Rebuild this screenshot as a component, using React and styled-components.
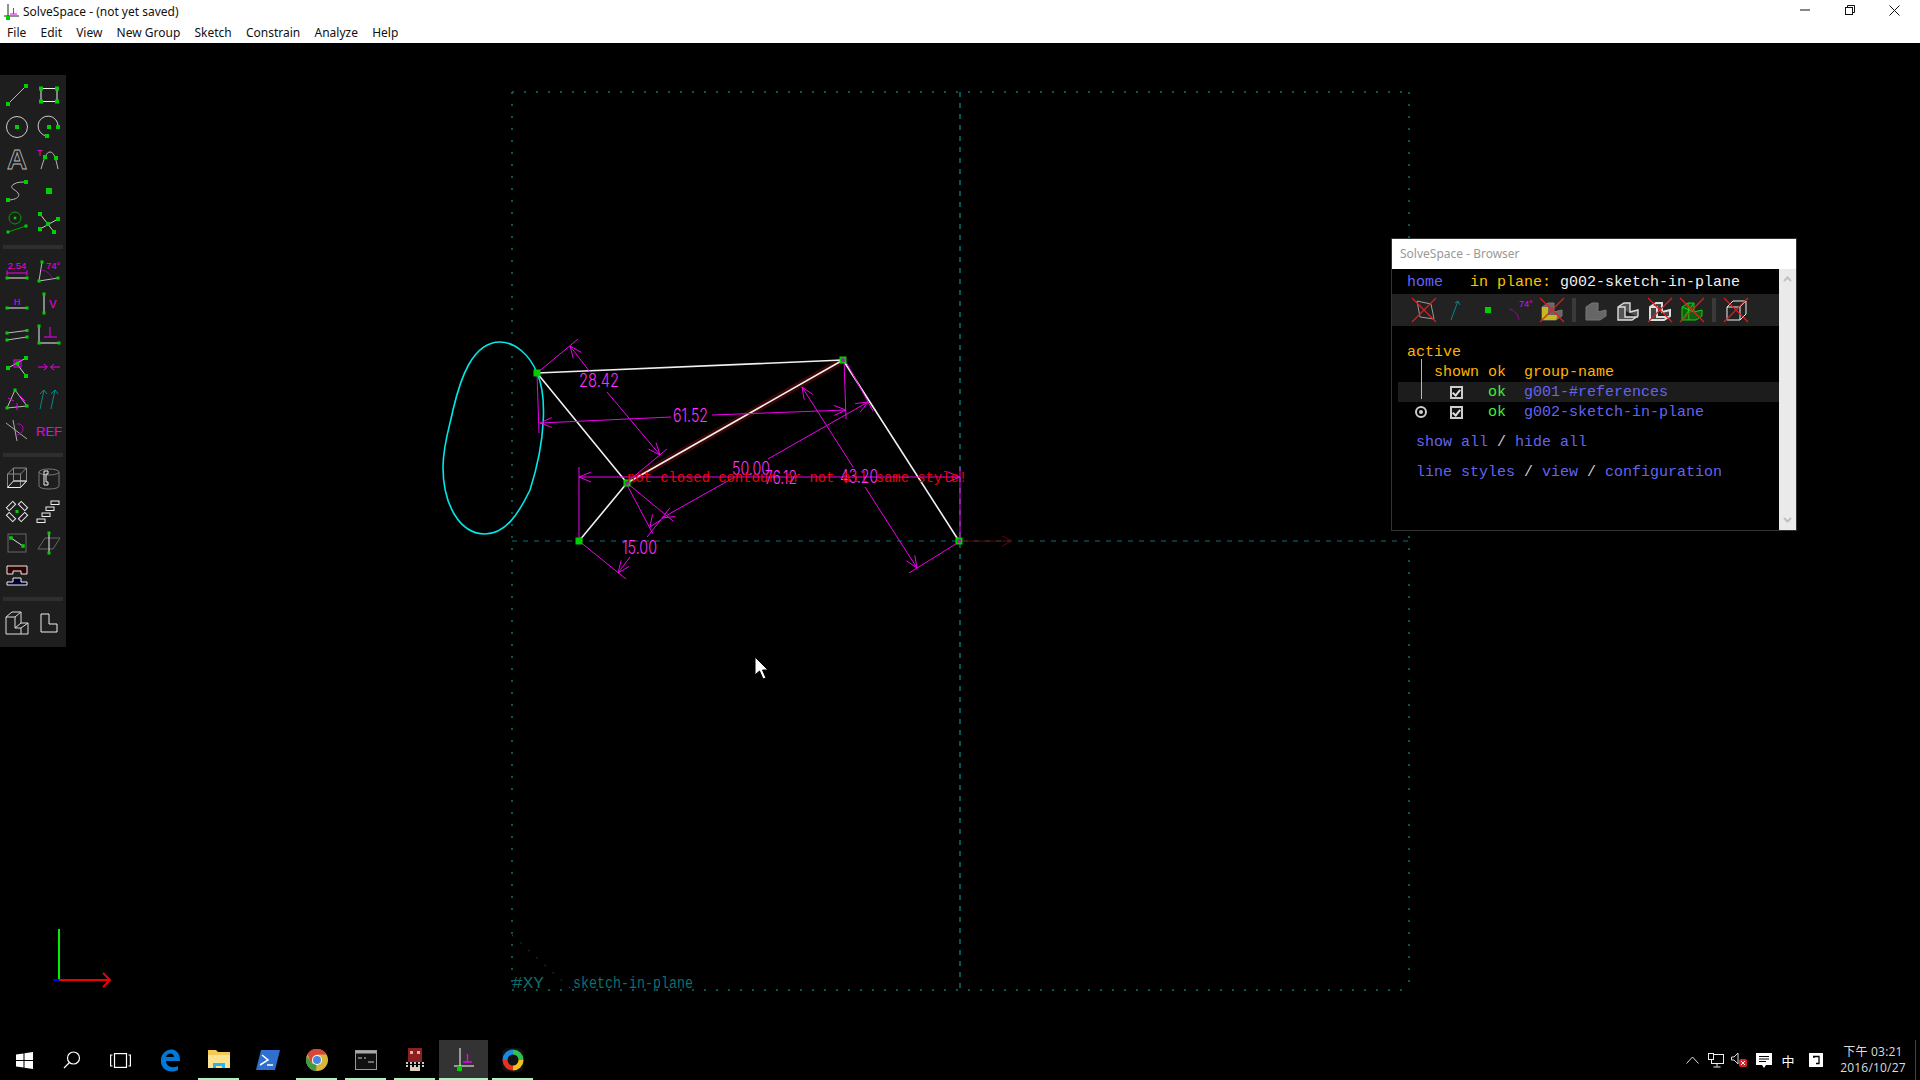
import React from 'react';
import styled, { createGlobalStyle } from 'styled-components';

const GREEN = '#00d000';
const MAGENTA = '#f000f0';
const UI_FONT = '"Noto Sans", "Open Sans", sans-serif';
const MONO_FONT = '"Liberation Mono", monospace';

const GlobalStyle = createGlobalStyle`
  html, body {
    margin: 0;
    padding: 0;
    background: #000;
    overflow: hidden;
  }
`;

const Page = styled.div`
  width: 1920px;
  height: 1080px;
  display: flex;
  flex-direction: column;
  font-family: ${UI_FONT};
`;

const TitleBar = styled.div`
  height: 22px;
  display: flex;
  align-items: center;
  background: #fff;
  padding-left: 3px;
`;

const TitleIcon = styled.div`
  width: 20px;
  height: 16px;
`;

const TitleText = styled.div`
  font-size: 12px;
  color: #111;
  flex: 1;
`;

const WindowControls = styled.div`
  display: flex;
  padding-right: 3px;
  align-self: flex-start;
`;

const WindowButton = styled.div`
  width: 45px;
  height: 20px;
  display: flex;
  align-items: center;
  justify-content: center;
`;

const MenuBar = styled.div`
  height: 21px;
  display: flex;
  align-items: center;
  background: #fff;
`;

const MenuItem = styled.div`
  font-size: 12px;
  color: #111;
  padding: 0 7.1px;
`;

const Canvas = styled.div`
  position: relative;
  flex: 1;
  background: #000;
`;

const CanvasSvg = styled.svg`
  position: absolute;
  inset: 0;
  width: 100%;
  height: 100%;
`;

const SketchText = styled.text`
  font-family: ${MONO_FONT};
`;

const DimensionText = styled.text`
  font-family: Inter, "Liberation Sans", sans-serif;
  font-weight: 300;
`;

const Toolbar = styled.div`
  position: absolute;
  left: 0;
  top: 32px;
  width: 66px;
  height: 572px;
  box-sizing: border-box;
  padding: 4px 1px 0;
  background: #1e1e1e;
`;

const ToolGrid = styled.div`
  display: grid;
  grid-template-columns: 32px 32px;
  grid-auto-rows: 32px;
`;

const ToolCell = styled.div`
  display: flex;
  align-items: center;
  justify-content: center;
`;

const ToolIcon = styled.svg`
  width: 24px;
  height: 24px;
  fill: none;
  overflow: visible;
`;

const ToolSeparator = styled.div`
  height: 4px;
  margin: 6px 2px;
  background: #2e2e2e;
`;

const HollowLabel = styled.text`
  font-family: "Liberation Sans", sans-serif;
  font-weight: 700;
  fill: none;
  stroke: #bbb;
  stroke-width: 0.8;
`;

const MagentaLabel = styled.text`
  font-family: "Liberation Sans", sans-serif;
  fill: ${MAGENTA};
  stroke: none;
`;

const BrowserWindow = styled.div`
  position: absolute;
  left: 1391px;
  top: 195px;
  width: 406px;
  height: 293px;
  box-sizing: border-box;
  border: 1px solid #333;
  display: flex;
  flex-direction: column;
  background: #000;
`;

const BrowserTitle = styled.div`
  height: 30px;
  line-height: 30px;
  background: #fff;
  color: #999;
  font-size: 12px;
  padding-left: 8px;
`;

const BrowserBody = styled.div`
  flex: 1;
  display: flex;
  min-height: 0;
`;

const BrowserContent = styled.div`
  flex: 1;
  padding-top: 3px;
  font-family: ${MONO_FONT};
  font-size: 15px;
`;

const ScrollBar = styled.div`
  width: 17px;
  background: #eaeaea;
  display: flex;
  flex-direction: column;
  align-items: center;
  justify-content: space-between;
  padding: 7px 0;
  box-sizing: border-box;
`;

const Line = styled.div`
  height: 20px;
  line-height: 22px;
  white-space: pre;
  padding-left: ${(p) => (p.$selected ? '9px' : '15px')};
  margin-left: ${(p) => (p.$selected ? '6px' : '0')};
  margin-top: ${(p) => (p.$gap ? '10px' : '0')};
  background: ${(p) => (p.$selected ? '#1c1c1c' : 'transparent')};
`;

const Txt = styled.span`
  color: ${(p) => p.$c};
`;

const CharCell = styled.span`
  display: inline-flex;
  width: 9px;
  height: 20px;
  vertical-align: top;
  align-items: center;
  justify-content: center;
`;

const CheckBox = styled.span`
  flex: none;
  width: 9px;
  height: 9px;
  border: 2px solid #ccc;
  background: #111;
  position: relative;

  &::after {
    content: '';
    position: absolute;
    left: 2px;
    top: 0;
    width: 3px;
    height: 6px;
    border: solid #ddd;
    border-width: 0 2px 2px 0;
    transform: rotate(40deg);
  }
`;

const Radio = styled.span`
  flex: none;
  width: 8px;
  height: 8px;
  border: 2px solid #ccc;
  border-radius: 50%;
  position: relative;

  &::after {
    content: '';
    position: absolute;
    left: 2px;
    top: 2px;
    width: 4px;
    height: 4px;
    border-radius: 50%;
    background: #ccc;
  }
`;

const IconStrip = styled.div`
  height: 32px;
  margin-top: 2px;
  display: flex;
  align-items: center;
  padding-left: 16px;
  background: #222;
`;

const StripCell = styled.div`
  width: 32px;
  display: flex;
  justify-content: center;
`;

const StripSeparator = styled.div`
  width: 4px;
  height: 24px;
  margin: 0 4px;
  background: #3a3a3a;
`;

const GroupList = styled.div`
  position: relative;
  margin-top: 16px;
`;

const ActiveRule = styled.div`
  position: absolute;
  left: 29px;
  top: 17px;
  width: 1px;
  height: 40px;
  background: #ffb400;
`;

const TaskBar = styled.div`
  height: 40px;
  display: flex;
  background: #000;
`;

const ShellButton = styled.div`
  width: 48px;
  display: flex;
  align-items: center;
  justify-content: center;
`;

const AppButtons = styled.div`
  display: flex;
  margin-left: 1px;
`;

const AppButton = styled.div`
  width: 49px;
  box-sizing: border-box;
  display: flex;
  align-items: center;
  justify-content: center;
  position: relative;
  background: ${(p) => (p.$active ? '#333' : 'transparent')};

  &::after {
    content: '';
    display: ${(p) => (p.$running ? 'block' : 'none')};
    position: absolute;
    bottom: 0;
    height: 2px;
    left: ${(p) => (p.$active ? '0' : '4px')};
    right: ${(p) => (p.$active ? '0' : '4px')};
    background: #a8f5b5;
  }
`;

const Tray = styled.div`
  margin-left: auto;
  display: flex;
  align-items: center;
`;

const TrayItem = styled.div`
  width: 24px;
  margin: ${(p) => (p.$spaced ? '0 4px' : '0')};
  display: flex;
  justify-content: center;
  color: #fff;
  font-size: ${(p) => (p.$cjk ? '13px' : 'inherit')};
  font-family: "Noto Sans CJK TC", sans-serif;
`;

const Clock = styled.div`
  width: 82px;
  display: flex;
  flex-direction: column;
  align-items: center;
  color: #ddd;
  font-size: 12px;
  letter-spacing: 0.2px;
  line-height: 16px;
  font-family: "Open Sans", "Noto Sans CJK TC", sans-serif;
`;

const ShowDesktop = styled.div`
  width: 1px;
  height: 40px;
  margin: 0 4px 0 1px;
  background: #444;
`;

const menus = ['File', 'Edit', 'View', 'New Group', 'Sketch', 'Constrain', 'Analyze', 'Help'];

function P({ x, y, s = 4 }) {
  return <rect x={x - s / 2} y={y - s / 2} width={s} height={s} fill={GREEN} stroke="none" />;
}

function Cross() {
  return <path d="M0 0 L24 24 M24 0 L0 24" stroke="#e02020" strokeWidth="1.1" />;
}

const lShape3d = 'M2 9 L8 5 L14 5 L14 14 L22 12 L22 18 L16 22 L2 22 Z';

const toolSections = [
  [
    <><path d="M3 21 L21 3" stroke="#bbb" /><P x={3} y={21} /><P x={21} y={3} /></>,
    <><rect x="4" y="5.5" width="16" height="13" stroke="#eee" /><P x={4} y={5.5} /><P x={20} y={5.5} /><P x={4} y={18.5} /><P x={20} y={18.5} /></>,
    <><circle cx="12" cy="12" r="10.5" stroke="#ccc" /><P x={12} y={12} /></>,
    <><path d="M21 12 A10 10 0 1 0 10 21" stroke="#ccc" /><P x={12} y={12} /><P x={21} y={12} /><P x={10} y={21} /></>,
    <HollowLabel x="12" y="22" fontSize="28" textAnchor="middle">A</HollowLabel>,
    <><MagentaLabel x="0" y="9" fontSize="9">T</MagentaLabel><path d="M4 22 C7 12 9 5 13 5 C17 5 19 12 21 22" stroke="#bbb" /><P x={8} y={10} /><P x={19} y={11} /></>,
    <><path d="M3 21 C10 21 16 18 13 14 C10 10 3 9 9 5 C12 3 17 3 21 3" stroke="#bbb" /><P x={3} y={21} /><P x={21} y={3} /></>,
    <P x={12} y={12} s={6} />,
    <><circle cx="10" cy="7" r="6" stroke="#00a000" /><P x={10} y={7} s={2.5} /><path d="M3 21 L21 15" stroke="#00a000" /><P x={3} y={21} s={3} /><P x={21} y={15} s={3} /></>,
    <><path d="M3 3 L17 21 M21 8 L3 18" stroke="#ccc" /><P x={3} y={3} /><P x={17} y={21} /><P x={21} y={8} /><P x={3} y={18} /><P x={11} y={13} /></>,
  ],
  [
    <><MagentaLabel x="12" y="10" fontSize="9.5" textAnchor="middle">2.54</MagentaLabel><path d="M2 14 H22 M2 11.5 V16.5 M22 11.5 V16.5" stroke={MAGENTA} /><path d="M2 19 H22" stroke="#eee" /><P x={2} y={19} s={3} /><P x={22} y={19} s={3} /></>,
    <><MagentaLabel x="9" y="9.5" fontSize="9.5">74°</MagentaLabel><path d="M5 3 L2 22 L21 19" stroke="#bbb" /><path d="M4 11 C10 12 14 15 15 20" stroke="#a000a0" /><P x={5} y={3} s={3} /><P x={2} y={22} s={3} /><P x={21} y={19} s={3} /></>,
    <><MagentaLabel x="12" y="14" fontSize="9" textAnchor="middle">H</MagentaLabel><path d="M2 17 H22" stroke="#eee" /><P x={2} y={17} s={3} /><P x={22} y={17} s={3} /></>,
    <><MagentaLabel x="16" y="17" fontSize="11" textAnchor="middle">V</MagentaLabel><path d="M7 3 V22" stroke="#eee" /><P x={7} y={3} s={3} /><P x={7} y={22} s={3} /></>,
    <><path d="M2 10 L22 7.5 M2 17 L22 14" stroke="#bbb" /><P x={2} y={10} s={3} /><P x={22} y={7.5} s={3} /><P x={2} y={17} s={3} /><P x={22} y={14} s={3} /></>,
    <><path d="M2 3 V20 H22" stroke="#eee" /><path d="M7 14 H20 M13 4 V14" stroke={MAGENTA} /><P x={2} y={3} s={3} /><P x={2} y={20} s={3} /><P x={22} y={20} s={3} /></>,
    <><path d="M3 13 L21 3 M12 9 L21 21" stroke="#ccc" /><rect x="9" y="5" width="7" height="7" stroke={MAGENTA} /><P x={3} y={13} /><P x={21} y={3} /><P x={21} y={21} /><P x={12.5} y={8.5} /></>,
    <path d="M1 12 H10 M7 9 L10.5 12 L7 15 M23 12 H14 M17 9 L13.5 12 L17 15" stroke={MAGENTA} />,
    <><path d="M10 3 L2 21 L22 19 Z" stroke="#bbb" /><path d="M3 11 L9 14 M15 9 L20 14 M12 16 L12 23" stroke={MAGENTA} /><P x={10} y={3} s={3} /><P x={2} y={21} s={3} /><P x={22} y={19} s={3} /></>,
    <path d="M3 22 L7 3 M3 7 L7 3 L10 7 M14 22 L18 3 M14 7 L18 3 L21 7" stroke="#008a8a" />,
    <><path d="M1 4 L22 20 M8 1 L12 22" stroke="#aaa" /><path d="M12 5 C18 4 20 11 16 14 C14 16 12 16 11 16" stroke="#c000c0" /></>,
    <MagentaLabel x="12" y="17" fontSize="13" textAnchor="middle">REF</MagentaLabel>,
  ],
  [
    <><path d="M8.5 1 H21.5 V14 L15.5 20.5 M2.5 7 L8.5 1 M15.5 7 L21.5 1 M2.5 7 H15.5 V20.5 M8.5 1 V14 H21.5 M2.5 7 V20.5" stroke="#888" /><path d="M2.5 20.5 H15.5 M2.5 20.5 L8.5 14 H21.5 L15.5 20.5" stroke="#eee" /></>,
    <><ellipse cx="12" cy="5" rx="10" ry="3" stroke="#777" /><path d="M2 5 V19 C2 23 22 23 22 19 V5" stroke="#777" /><path d="M11 4 H7 V18 H11 V15 H9 V7 H11 Z" stroke="#eee" /></>,
    <><rect x="1.5" y="5" width="9" height="4" transform="rotate(-45 6 7)" stroke="#eee" /><rect x="13.5" y="5" width="9" height="4" transform="rotate(45 18 7)" stroke="#eee" /><rect x="1.5" y="16" width="9" height="4" transform="rotate(45 6 18)" stroke="#eee" /><rect x="13.5" y="16" width="9" height="4" transform="rotate(-45 18 18)" stroke="#eee" /><P x={12} y={12.5} s={3} /></>,
    <><rect x="14" y="2" width="8" height="3.5" stroke="#eee" /><rect x="9" y="8" width="8" height="3.5" stroke="#eee" /><rect x="5" y="14" width="8" height="3.5" stroke="#eee" /><rect x="0" y="20" width="8" height="3.5" stroke="#eee" /></>,
    <><rect x="3" y="3" width="18" height="18" stroke="#666" /><path d="M6 7 L18 15" stroke="#ddd" /><P x={6} y={7} s={3.5} /><P x={18} y={15} s={3.5} /></>,
    <><path d="M8 7 H23 L16 18 H1 Z" stroke="#666" /><path d="M12 2 V22" stroke="#eee" /><P x={12} y={2} s={3} /><P x={12} y={22} s={3} /></>,
    <><path d="M2 3 H22 V11 H16 V8 H8 V11 H2 Z" stroke="#eee" fill="#300000" /><path d="M8 15 H16 V19 H22 V22 H2 V19 H8 Z" stroke="#eee" fill="#000030" /></>,
    null,
  ],
  [
    <><path d="M1 6 L7 1 H16 V12 H23 V23 H1 Z" stroke="#ddd" /><path d="M1 6 H10 V17 H16 M10 6 L16 1 M10 17 L16 12 M23 12 L16 17 V23" stroke="#ddd" /></>,
    <path d="M4 3 H12 V13 H20 V21 H4 Z" stroke="#eee" />,
  ],
];

const browserIcons = [
  { key: 'planes', cross: true, art: <path d="M5 3 L19 6 L22 21 L8 19 Z" stroke="#999" /> },
  { key: 'normals', art: <path d="M7 22 L14 3 M11 5 L14 3 L16 7" stroke="#008a8a" /> },
  { key: 'points', art: <P x={12} y={12} s={6} /> },
  { key: 'constraints', art: <><MagentaLabel x="11" y="9" fontSize="9">74°</MagentaLabel><path d="M1 11 C7 12 10 17 11 22" stroke="#a000a0" /></> },
  { key: 'faces', cross: true, art: <><path d={lShape3d} stroke="#777" fill="#666" /><path d="M2 9 H8 V17 H18 L16 22 H2 Z" fill="#c8b820" /></> },
  { sep: true, key: 's1' },
  { key: 'solid', art: <path d={lShape3d} stroke="#777" fill="#666" /> },
  { key: 'edges', art: <path d={lShape3d + ' M2 9 H9 V19 H22 M8 5 L14 5'} stroke="#ddd" fill="#555" strokeWidth="1.4" /> },
  { key: 'outline', cross: true, art: <path d={lShape3d + ' M2 9 H9 V19 H22'} stroke="#ddd" fill="#444" strokeWidth="2" /> },
  { key: 'mesh', cross: true, art: <path d={lShape3d + ' M2 9 L14 14 M8 5 L9 22 M14 5 L2 22'} stroke="#10d010" fill="#106010" /> },
  { sep: true, key: 's2' },
  { key: 'hidden', cross: true, art: <path d="M3 9 L9 3 H22 V16 L16 22 H3 Z M3 9 H16 V22 M16 9 L22 3" stroke="#eee" /> },
];

// drawing data, in page coordinates
const dimLines = [
  [537, 373, 578, 339], [570, 346, 590, 372], [607, 392, 660, 455], [626, 483, 667, 449],
  [537, 373, 539, 433], [540, 423, 671, 417], [712, 415, 846, 410], [844, 360, 846, 419],
  [579, 467, 579, 541], [579, 477, 960, 477], [960, 467, 960, 541],
  [662, 518, 733, 478], [768, 459, 868, 402], [627, 483, 673, 521], [845, 360, 873, 411],
  [579, 541, 626, 579], [618, 573, 630, 557], [626, 483, 653, 534], [647, 537, 663, 517],
  [853, 467, 802, 387], [865, 487, 917, 568], [959, 542, 909, 573],
];

const arrows = [
  [570, 346, 590, 372], [660, 455, 607, 392], [540, 423, 671, 417], [846, 410, 712, 415],
  [579, 477, 700, 477], [960, 477, 800, 477], [662, 518, 733, 478], [868, 402, 768, 459],
  [618, 573, 630, 557], [650, 527, 660, 512], [802, 387, 853, 467], [917, 568, 865, 487],
];

const dimTexts = [
  ['28.42', 579, 387, 40], ['61.52', 673, 422, 35], ['50.00', 732, 475, 38],
  ['76.12', 765, 484, 32], ['43.20', 840, 483, 38], ['15.00', 622, 554, 35],
];

function arrowHead([x, y, fx, fy]) {
  const len = Math.hypot(fx - x, fy - y);
  const ux = (fx - x) / len;
  const uy = (fy - y) / len;
  const a = [x + ux * 12 - uy * 5, y + uy * 12 + ux * 5];
  const b = [x + ux * 12 + uy * 5, y + uy * 12 - ux * 5];
  return `M${a[0]} ${a[1]} L${x} ${y} L${b[0]} ${b[1]}`;
}

function Drawing() {
  return (
    <CanvasSvg viewBox="0 43 1920 997">
      <g fill="none">
        <path d="M512 92 H1409 M512 990 H1409" stroke="#0a7070" strokeWidth="1.5" strokeDasharray="2 10" />
        <path d="M512 92 V990 M1409 92 V990" stroke="#0a7070" strokeWidth="1.5" strokeDasharray="2 10" />
        <path d="M960 92 V990" stroke="#0a7070" strokeWidth="1.5" strokeDasharray="5 6" />
        <path d="M512 541 H1409" stroke="#0a7070" strokeWidth="1" strokeDasharray="5 6" />
        <path d="M512 935 L572 990" stroke="#0a5a5a" strokeWidth="1" strokeDasharray="2 9" />
        <path d="M960 541 H1012 M1002 536 L1012 541 L1002 546" stroke="#5a0808" />

        <path d="M537 373 C547 395 546 440 530 490 C518 515 505 534 485 534 C460 534 443 505 443 467 C443 445 450 425 453 410 C460 380 472 342 500 342 C515 342 530 355 537 373 Z" stroke="#00e8e8" strokeWidth="1.6" />
        <path d="M627 483 L843 360" stroke="#3a0606" strokeWidth="7" />
        <path d="M537 373 L843 360 M537 373 L627 483 L579 541 M627 483 L843 360 M843 360 L959 541" stroke="#f0f0f0" strokeWidth="1.6" />

        {dimLines.map((l, i) => (
          <path key={i} d={`M${l[0]} ${l[1]} L${l[2]} ${l[3]}`} stroke={MAGENTA} />
        ))}
        {arrows.map((a, i) => (
          <path key={i} d={arrowHead(a)} stroke={MAGENTA} />
        ))}

        <path d="M59 929 V980" stroke="#00f000" strokeWidth="2" />
        <path d="M59 980 H110 M103 973 L110 980 L103 987" stroke="#f00000" strokeWidth="2" />
        <path d="M53 980 H59" stroke="#0000f0" strokeWidth="2" />
      </g>

      {[[537, 373], [843, 360], [627, 483], [579, 541], [959, 541]].map(([x, y]) => (
        <P key={x} x={x} y={y} s={7} />
      ))}
      {[[843, 360], [627, 483], [959, 541]].map(([x, y]) => (
        <circle key={x} cx={x} cy={y} r="2" fill="#a020a0" />
      ))}

      {dimTexts.map(([t, x, y, w]) => (
        <DimensionText key={t} x={x} y={y} textLength={w} lengthAdjust="spacingAndGlyphs" fontSize="18" fill="#ff30ff">{t}</DimensionText>
      ))}
      <SketchText x="627" y="482" textLength="340" lengthAdjust="spacingAndGlyphs" fontSize="15" fill="#f00000">not closed contour or not all same style!</SketchText>
      <SketchText x="512" y="988" textLength="32" lengthAdjust="spacingAndGlyphs" fontSize="17" fill="#0a7070">#XY</SketchText>
      <SketchText x="573" y="988" textLength="120" lengthAdjust="spacingAndGlyphs" fontSize="16" fill="#0a7070">sketch-in-plane</SketchText>

      <path d="M755 657 V675 L759.5 671 L763 679 L766 678 L762.5 670 L768 670 Z" fill="#fff" stroke="#000" />
    </CanvasSvg>
  );
}

function AppGlyph({ size = 16 }) {
  return (
    <svg width={size} height={size} viewBox="0 0 16 16" fill="none">
      <path d="M5 0 V15 M1 12 H16" stroke="#222" />
      <path d="M7 10 H14 M10.5 4 V10" stroke="#e000e0" />
      <rect x="3" y="12" width="4" height="4" fill="#00d000" />
    </svg>
  );
}

function TaskIcon({ name }) {
  switch (name) {
    case 'start':
      return (
        <svg width="17" height="17" viewBox="0 0 17 17"><path d="M0 2.5 L7.5 1.4 V8 H0 Z M8.5 1.2 L17 0 V8 H8.5 Z M0 9 H7.5 V15.6 L0 14.5 Z M8.5 9 H17 V17 L8.5 15.8 Z" fill="#fff" /></svg>
      );
    case 'search':
      return (
        <svg width="18" height="18" viewBox="0 0 18 18" fill="none" stroke="#fff" strokeWidth="1.2"><circle cx="10.5" cy="7" r="6" /><path d="M6.5 11.5 L1 17" /></svg>
      );
    case 'taskview':
      return (
        <svg width="21" height="15" viewBox="0 0 21 15" fill="none" stroke="#fff" strokeWidth="1.2"><rect x="4.5" y="0.6" width="12" height="13.8" /><path d="M2.5 2 H0.6 V13 H2.5 M18.5 2 H20.4 V13 H18.5" /></svg>
      );
    case 'edge':
      return (
        <svg width="22" height="24" viewBox="0 0 22 24" fill="none"><path d="M2 12 C2 4 11 -1 17 3 C20 5 21 9 21 13 H7 C7 18 13 21 19 18 V22 C11 26 1 22 2 12 Z M7 9 H15 C15 5 9 4 7 9 Z" fill="#0078d7" fillRule="evenodd" /></svg>
      );
    case 'explorer':
      return (
        <svg width="22" height="22" viewBox="0 0 22 22"><path d="M0 1 H8 L10 3 H22 V19 H0 Z" fill="#f4c958" /><path d="M0 6 H22 V19 H0 Z" fill="#fbe392" /><path d="M5 19 V14 H17 V19 H14 V17 H8 V19 Z" fill="#26b8e8" /></svg>
      );
    case 'powershell':
      return (
        <svg width="24" height="20" viewBox="0 0 24 20"><path d="M5 0 H24 L19 20 H0 Z" fill="#2f6fd0" /><path d="M6 5 L12 10 L4 15 M11 15 H17" fill="none" stroke="#fff" strokeWidth="1.5" /></svg>
      );
    case 'chrome':
      return (
        <svg width="22" height="22" viewBox="0 0 22 22"><circle cx="11" cy="11" r="11" fill="#d9b53a" /><path d="M11 0 A11 11 0 0 1 20.5 5.5 H11 L5 14 L1.5 5 A11 11 0 0 1 11 0 Z" fill="#d8453a" /><path d="M0.8 7 L6.5 15 L11 11 L10 22 A11 11 0 0 1 0.8 7 Z" fill="#3f9a4a" /><circle cx="11" cy="11" r="5" fill="#fff" /><circle cx="11" cy="11" r="4" fill="#4a86e0" /></svg>
      );
    case 'cmd':
      return (
        <svg width="22" height="20" viewBox="0 0 22 20"><rect x="0.5" y="0.5" width="21" height="19" fill="#111" stroke="#999" /><rect x="1" y="1" width="20" height="2.5" fill="#aaa" /><path d="M3 8 H7 M9 8 H11 M13 12 H19" stroke="#ccc" /></svg>
      );
    case 'cat':
      return (
        <svg width="20" height="24" viewBox="0 0 20 24"><rect x="3" y="0" width="14" height="14" fill="#8a2020" /><rect x="5" y="3" width="3" height="3" fill="#e8b0a0" /><rect x="12" y="3" width="3" height="3" fill="#e8b0a0" /><path d="M1 15 H19 M1 18 H19" stroke="#ccc" strokeDasharray="2 2" strokeWidth="2" /><rect x="5" y="19" width="10" height="4" fill="#d8d0b8" /></svg>
      );
    case 'solvespace':
      return (
        <svg width="20" height="24" viewBox="0 0 20 24" fill="none"><path d="M6 0 V22 M0 18 H20" stroke="#fff" /><path d="M9 14 H18 M13.5 6 V14" stroke="#f000f0" strokeWidth="1.4" /><rect x="3" y="18" width="5" height="5" fill="#00d000" /></svg>
      );
    default:
      return (
        <svg width="22" height="24" viewBox="0 0 22 24" fill="none" strokeWidth="5"><rect width="22" height="24" rx="6" fill="#111" /><path d="M3 12 A8 8 0 0 1 11 4" stroke="#1a8ae0" /><path d="M11 4 A8 8 0 0 1 19 12" stroke="#30c050" /><path d="M19 12 A8 8 0 0 1 11 20" stroke="#f0c020" /><path d="M11 20 A8 8 0 0 1 3 12" stroke="#e83020" /></svg>
      );
  }
}

const leftButtons = ['start', 'search', 'taskview'];
const appButtons = [
  { name: 'edge' },
  { name: 'explorer', running: true },
  { name: 'powershell' },
  { name: 'chrome', running: true },
  { name: 'cmd', running: true },
  { name: 'cat', running: true },
  { name: 'solvespace', running: true, active: true },
  { name: 'rainbow', running: true },
];

export default function App() {
  return (
    <Page>
      <GlobalStyle />
      <TitleBar>
        <TitleIcon><AppGlyph /></TitleIcon>
        <TitleText>SolveSpace - (not yet saved)</TitleText>
        <WindowControls>
          <WindowButton><svg width="10" height="10" viewBox="0 0 10 10"><path d="M0 5 H10" stroke="#111" /></svg></WindowButton>
          <WindowButton><svg width="10" height="10" viewBox="0 0 10 10" fill="none"><rect x="0.5" y="2.5" width="7" height="7" stroke="#111" /><path d="M2.5 2 V0.5 H9.5 V7.5 H8" stroke="#111" /></svg></WindowButton>
          <WindowButton><svg width="11" height="11" viewBox="0 0 11 11"><path d="M0.5 0.5 L10.5 10.5 M10.5 0.5 L0.5 10.5" stroke="#111" /></svg></WindowButton>
        </WindowControls>
      </TitleBar>
      <MenuBar>
        {menus.map((m) => <MenuItem key={m}>{m}</MenuItem>)}
      </MenuBar>

      <Canvas>
        <Drawing />
        <Toolbar>
          {toolSections.map((section, i) => (
            <React.Fragment key={i}>
              {i > 0 && <ToolSeparator />}
              <ToolGrid>
                {section.map((icon, j) => (
                  <ToolCell key={j}>
                    {icon && <ToolIcon viewBox="0 0 24 24">{icon}</ToolIcon>}
                  </ToolCell>
                ))}
              </ToolGrid>
            </React.Fragment>
          ))}
        </Toolbar>

        <BrowserWindow>
          <BrowserTitle>SolveSpace - Browser</BrowserTitle>
          <BrowserBody>
            <BrowserContent>
              <Line><Txt $c="#6464ff">home</Txt>{'   '}<Txt $c="#ffc000">in plane: </Txt><Txt $c="#f0f0f0">g002-sketch-in-plane</Txt></Line>
              <IconStrip>
                {browserIcons.map((b) => b.sep ? <StripSeparator key={b.key} /> : (
                  <StripCell key={b.key}>
                    <ToolIcon viewBox="0 0 24 24">
                      {b.art}
                      {b.cross && <Cross />}
                    </ToolIcon>
                  </StripCell>
                ))}
              </IconStrip>
              <GroupList>
                <Line><Txt $c="#ffb400">active</Txt></Line>
                <Line><Txt $c="#ffb400">{'   shown ok  group-name'}</Txt></Line>
                <Line $selected>
                  {'     '}<CharCell><CheckBox /></CharCell>{'   '}<Txt $c="#40f040">ok</Txt>{'  '}<Txt $c="#6464f0">g001-#references</Txt>
                </Line>
                <Line>
                  {' '}<CharCell><Radio /></CharCell>{'   '}<CharCell><CheckBox /></CharCell>{'   '}<Txt $c="#40f040">ok</Txt>{'  '}<Txt $c="#6464f0">g002-sketch-in-plane</Txt>
                </Line>
                <ActiveRule />
              </GroupList>
              <Line $gap>{' '}<Txt $c="#6464f0">show all</Txt><Txt $c="#ccc">{' / '}</Txt><Txt $c="#6464f0">hide all</Txt></Line>
              <Line $gap>{' '}<Txt $c="#6464f0">line styles</Txt><Txt $c="#ccc">{' / '}</Txt><Txt $c="#6464f0">view</Txt><Txt $c="#ccc">{' / '}</Txt><Txt $c="#6464f0">configuration</Txt></Line>
            </BrowserContent>
            <ScrollBar>
              <svg width="9" height="6" viewBox="0 0 9 6" fill="none"><path d="M1 5 L4.5 1.5 L8 5" stroke="#c0c0c0" strokeWidth="2" /></svg>
              <svg width="9" height="6" viewBox="0 0 9 6" fill="none"><path d="M1 1 L4.5 4.5 L8 1" stroke="#c0c0c0" strokeWidth="2" /></svg>
            </ScrollBar>
          </BrowserBody>
        </BrowserWindow>
      </Canvas>

      <TaskBar>
        {leftButtons.map((b) => <ShellButton key={b}><TaskIcon name={b} /></ShellButton>)}
        <AppButtons>
          {appButtons.map((b) => (
            <AppButton key={b.name} $running={b.running} $active={b.active}><TaskIcon name={b.name} /></AppButton>
          ))}
        </AppButtons>
        <Tray>
          <TrayItem>
            <svg width="13" height="8" viewBox="0 0 13 8" fill="none"><path d="M0.5 7.5 L6.5 1 L12.5 7.5" stroke="#ddd" /></svg>
          </TrayItem>
          <TrayItem>
            <svg width="16" height="15" viewBox="0 0 16 15" fill="none" stroke="#eee"><rect x="3.5" y="1.5" width="12" height="9" /><path d="M9 11 V13.5 M5.5 14 H12.5" /><rect x="0.5" y="0.5" width="5" height="6" fill="#000" /></svg>
          </TrayItem>
          <TrayItem>
            <svg width="18" height="16" viewBox="0 0 18 16" fill="none"><path d="M0.5 5 H3 L7 1 V12 L3 8 H0.5 Z" stroke="#ddd" /><rect x="8" y="7" width="8" height="8" rx="2" fill="#e02030" /><path d="M10 9 L14 13 M14 9 L10 13" stroke="#fff" /></svg>
          </TrayItem>
          <TrayItem>
            <svg width="16" height="15" viewBox="0 0 16 15"><path d="M0 0 H16 V12 H10 L8 15 L6 12 H0 Z" fill="#fff" /><path d="M3 3.5 H13 M3 6 H13 M3 8.5 H10" stroke="#000" /></svg>
          </TrayItem>
          <TrayItem $cjk>中</TrayItem>
          <TrayItem $spaced>
            <svg width="14" height="14" viewBox="0 0 14 14" fill="none"><rect width="14" height="14" fill="#fff" /><path d="M4 3.5 H10 V10.5 H7 M5 3 V5" stroke="#000" strokeWidth="1.3" /></svg>
          </TrayItem>
          <Clock>
            <span>下午 03:21</span>
            <span>2016/10/27</span>
          </Clock>
          <ShowDesktop />
        </Tray>
      </TaskBar>
    </Page>
  );
}
